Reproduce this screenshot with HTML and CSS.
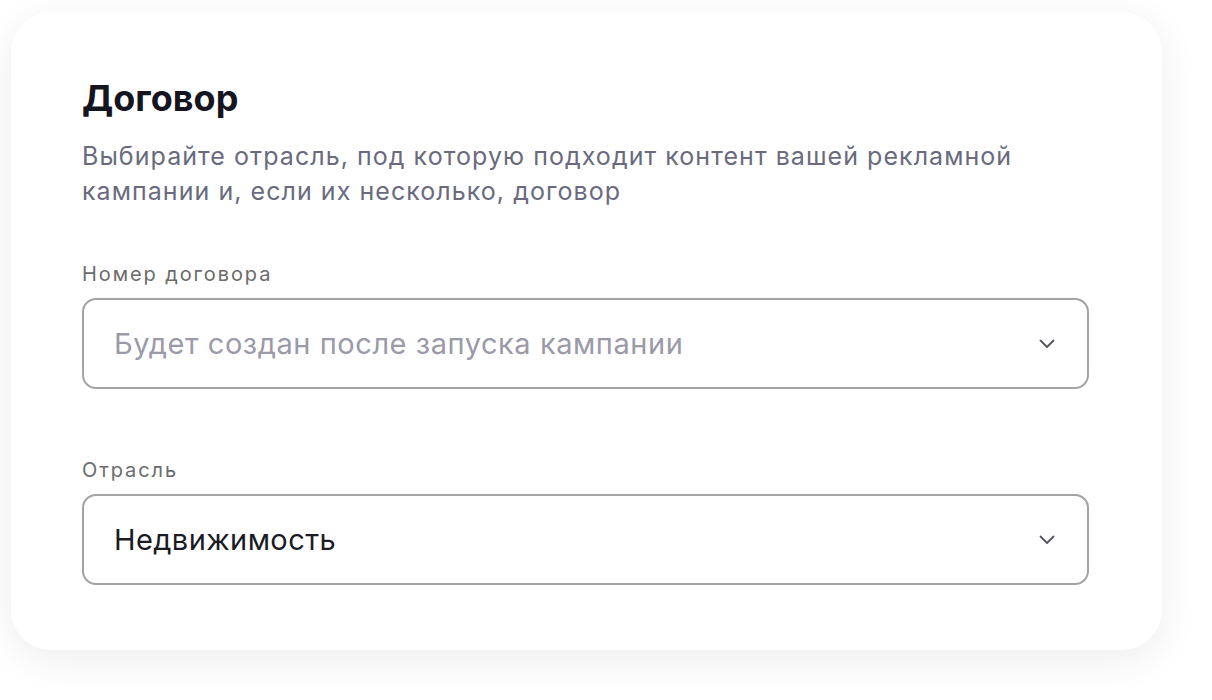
FILE: index.html
```html
<!DOCTYPE html>
<html lang="ru">
<head>
  <meta charset="UTF-8">
  <title>Договор</title>
  <link rel="stylesheet" href="styles.css">
</head>
<body>
  <div class="card">
    <h1>Договор</h1>
    <p class="hint">Выбирайте отрасль, под которую подходит контент вашей рекламной кампании и, если их несколько, договор</p>

    <div class="field">
      <label>Номер договора</label>
      <div class="select">
        <span class="placeholder">Будет создан после запуска кампании</span>
        <svg class="chevron" width="16" height="10" viewBox="0 0 16 10"><path d="M1.5 1.5 L8 8 L14.5 1.5" fill="none" stroke="#55555f" stroke-width="1.8" stroke-linecap="round" stroke-linejoin="round"/></svg>
      </div>
    </div>

    <div class="field">
      <label>Отрасль</label>
      <div class="select">
        <span class="value">Недвижимость</span>
        <svg class="chevron" width="16" height="10" viewBox="0 0 16 10"><path d="M1.5 1.5 L8 8 L14.5 1.5" fill="none" stroke="#55555f" stroke-width="1.8" stroke-linecap="round" stroke-linejoin="round"/></svg>
      </div>
    </div>
  </div>
</body>
</html>
```

FILE: styles.css
```css
body { margin: 0; padding-bottom: 50px; background: #fff; font-family: Inter, "Noto Sans", sans-serif; }
.card { margin: 12px 0 0 11px; width: 1151px; box-sizing: border-box; padding: 64px 73px 65px 71px; background: #fff; border-radius: 40px; box-shadow: 0 10px 40px rgba(0,0,0,0.07); }
h1 { margin: 0; font-size: 36px; line-height: 44px; font-weight: 700; color: #15151f; }
.hint { margin: 19px 0 0; font-size: 25px; line-height: 35px; color: #696a7d; letter-spacing: 1.05px; }
.field { margin-top: 51px; }
.field + .field { margin-top: 67px; }
.field label { display: block; font-size: 20px; line-height: 28px; color: #6b6b6b; margin-bottom: 10px; letter-spacing: 1.9px; }
.select { height: 91px; box-sizing: border-box; border: 2px solid #a3a3a3; border-radius: 14px; display: flex; align-items: center; justify-content: space-between; padding: 0 32px 0 30px; }
.placeholder { font-size: 29px; color: #9a9aa8; letter-spacing: 0.55px; }
.value { font-size: 29px; color: #1b1b26; letter-spacing: 0.4px; }
.chevron { display: block; }
```
